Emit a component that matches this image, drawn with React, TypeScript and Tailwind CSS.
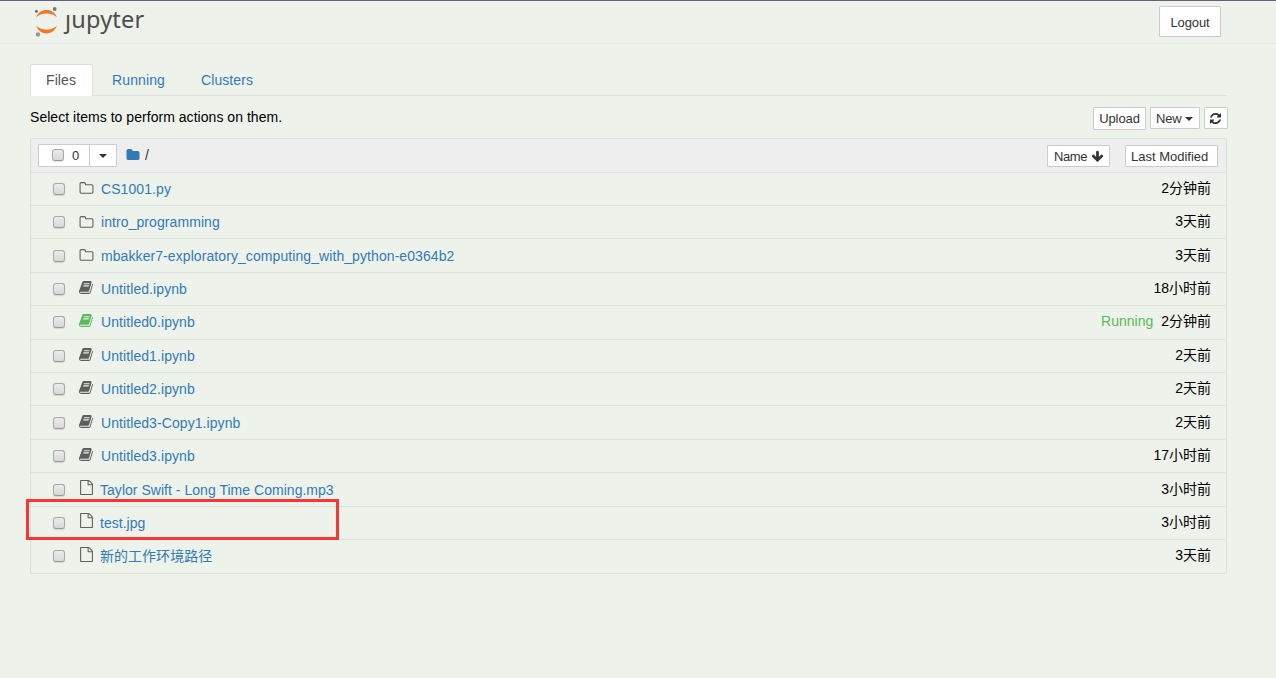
import React from 'react';

type Kind = 'folder' | 'notebook' | 'running' | 'file';

interface Item {
  name: string;
  kind: Kind;
  modified: string;
}

const items: Item[] = [
  { name: 'CS1001.py', kind: 'folder', modified: '2分钟前' },
  { name: 'intro_programming', kind: 'folder', modified: '3天前' },
  { name: 'mbakker7-exploratory_computing_with_python-e0364b2', kind: 'folder', modified: '3天前' },
  { name: 'Untitled.ipynb', kind: 'notebook', modified: '18小时前' },
  { name: 'Untitled0.ipynb', kind: 'running', modified: '2分钟前' },
  { name: 'Untitled1.ipynb', kind: 'notebook', modified: '2天前' },
  { name: 'Untitled2.ipynb', kind: 'notebook', modified: '2天前' },
  { name: 'Untitled3-Copy1.ipynb', kind: 'notebook', modified: '2天前' },
  { name: 'Untitled3.ipynb', kind: 'notebook', modified: '17小时前' },
  { name: 'Taylor Swift - Long Time Coming.mp3', kind: 'file', modified: '3小时前' },
  { name: 'test.jpg', kind: 'file', modified: '3小时前' },
  { name: '新的工作环境路径', kind: 'file', modified: '3天前' },
];

const paths = {
  folderOpen:
    'M1600 1312v-704q0-40-28-68t-68-28h-704q-40 0-68-28t-28-68v-64q0-40-28-68t-68-28h-320q-40 0-68 28t-28 68v960q0 40 28 68t68 28h1216q40 0 68-28t28-68zm128-704v704q0 92-66 158t-158 66h-1216q-92 0-158-66t-66-158v-960q0-92 66-158t158-66h320q92 0 158 66t66 158v32h672q92 0 158 66t66 158z',
  folder:
    'M1728 608v704q0 92-66 158t-158 66h-1216q-92 0-158-66t-66-158v-960q0-92 66-158t158-66h320q92 0 158 66t66 158v32h672q92 0 158 66t66 158z',
  file: 'M1596 380q28 28 48 76t20 88v1152q0 40-28 68t-68 28h-1344q-40 0-68-28t-28-68v-1600q0-40 28-68t68-28h896q40 0 88 20t76 48zm-444-244v376h376q-10-29-22-41l-313-313q-12-12-41-22zm384 1528v-1024h-416q-40 0-68-28t-28-68v-416h-768v1536h1280z',
  book: 'M1639 478q40 57 18 129l-275 906q-19 64-76.5 107.5t-122.5 43.5h-923q-77 0-148.5-53.5t-99.5-131.5q-24-67-2-127 0-4 3-27t4-37q1-8-3-21.5t-3-19.5q2-11 8-21t16.5-23.5 16.5-23.5q23-38 45-91.5t30-91.5q3-10 .5-30t-.5-28q3-11 17-28t17-23q21-36 42-92t25-90q1-9-2.5-32t.5-28q4-13 22-30.5t22-22.5q19-26 42.5-84.5t27.5-96.5q1-8-3-25.5t-2-26.5q2-8 9-18t18-23 17-21q8-12 16.5-30.5t15-35 16-36 19.5-32 26.5-23.5 36-11.5 47.5 5.5l-1 3q38-9 51-9h761q74 0 114 56t18 130l-274 906q-36 119-71.5 153.5t-128.5 34.5h-869q-27 0-38 15-11 16-1 43 24 70 144 70h923q29 0 56-15.5t35-41.5l300-987q7-22 5-57 38 15 59 43zm-1064 2q-4 13 2 22.5t20 9.5h608q13 0 25.5-9.5t16.5-22.5l21-64q4-13-2-22.5t-20-9.5h-608q-13 0-25.5 9.5t-16.5 22.5zm-83 256q-4 13 2 22.5t20 9.5h608q13 0 25.5-9.5t16.5-22.5l21-64q4-13-2-22.5t-20-9.5h-608q-13 0-25.5 9.5t-16.5 22.5z',
  refresh:
    'M1639 1056q0 5-1 7-64 268-268 434.5t-478 166.5q-146 0-282.5-55t-243.5-157l-129 129q-19 19-45 19t-45-19-19-45v-448q0-26 19-45t45-19h448q26 0 45 19t19 45-19 45l-137 137q71 66 161 102t187 36q134 0 250-65t186-179q11-17 53-117 8-23 30-23h192q13 0 22.5 9.5t9.5 22.5zm25-800v448q0 26-19 45t-45 19h-448q-26 0-45-19t-19-45 19-45l138-138q-148-137-349-137-134 0-250 65t-186 179q-11 17-53 117-8 23-30 23h-199q-13 0-22.5-9.5t-9.5-22.5v-7q65-268 270-434.5t480-166.5q146 0 284 55.5t245 156.5l130-129q19-19 45-19t45 19 19 45z',
  arrowDown:
    'M1675 832q0 53-37 90l-651 652q-39 37-91 37-53 0-90-37l-651-652q-38-36-38-90 0-53 38-91l74-75q39-37 91-37 53 0 90 37l294 294v-704q0-52 38-90t90-38h128q52 0 90 38t38 90v704l294-294q37-37 90-37 52 0 91 37l75 75q37 39 37 91z',
};

const Icon: React.FC<{ d: string; className?: string }> = ({ d, className = '' }) => (
  <svg viewBox="0 0 1792 1792" fill="currentColor" className={`shrink-0 ${className}`}>
    <path d={d} />
  </svg>
);

const Caret: React.FC = () => (
  <span className="mt-0.5 border-x-4 border-t-4 border-x-transparent border-t-[#333]" />
);

const Checkbox: React.FC = () => (
  <span className="size-3 shrink-0 rounded-[3px] border border-[#a9a9a9] border-b-[#999] bg-linear-to-b from-[#ebebeb] to-[#d8d8d8] shadow-[0_1px_1px_rgba(0,0,0,0.12)]" />
);

const button = 'flex items-center border border-[#ccc] bg-white text-[13px] leading-none text-[#333] rounded-[1px]';

const ItemIcon: React.FC<{ kind: Kind }> = ({ kind }) => {
  if (kind === 'folder') return <Icon d={paths.folderOpen} className="size-[15px] text-[#5e5e5e]" />;
  if (kind === 'file') return <Icon d={paths.file} className="mb-1 size-[15px] text-[#5e5e5e]" />;
  return (
    <Icon
      d={paths.book}
      className={`mb-[3px] size-[15px] ${kind === 'running' ? 'text-[#5cb85c]' : 'text-[#5e5e5e]'}`}
    />
  );
};

const Row: React.FC<{ item: Item }> = ({ item }) => (
  <li className="mr-px flex h-[33.42px] items-center border-t border-[#ddd] pr-3.5 pl-[22px]">
    <Checkbox />
    <span className="ml-3.5 flex w-[22px]">
      <ItemIcon kind={item.kind} />
    </span>
    <a className={`text-[#337ab7] ${item.kind === 'file' ? '-ml-px tracking-[0.03px]' : 'tracking-[0.08px]'}`}>
      {item.name}
    </a>
    {item.kind === 'running' && <span className="mb-[3px] ml-auto pr-2 text-[#5cb85c]">Running</span>}
    <span className={`mb-0.5 text-black ${item.kind === 'running' ? '' : 'ml-auto'}`}>{item.modified}</span>
  </li>
);

const Logo: React.FC = () => (
  <div className="flex h-8 items-start">
    <svg viewBox="0 0 28 32" className="h-8 w-7">
      <path d="M4 11.6C6 6.500 9.500 4 14.500 4S23 6.500 25 11.600C22.500 8.800 19 7.500 14.500 7.500S6.500 8.800 4 11.600Z" fill="#f37726" />
      <path d="M4 19.600C6 24.800 9.500 27.400 14.500 27.400S23 24.800 25 19.600C22.500 22.400 19 23.700 14.500 23.700S6.500 22.400 4 19.600Z" fill="#f37726" />
      <circle cx="22.700" cy="3" r="1.900" fill="#767677" />
      <circle cx="4.400" cy="5.400" r="1.400" fill="#616262" />
      <circle cx="6" cy="28.400" r="2.200" fill="#989798" />
    </svg>
    <span className="-mt-[3px] ml-[5px] font-['Noto_Sans'] text-[23.500px] leading-8 tracking-[0.2px] text-[#4e4e4e]">
      ȷupyter
    </span>
  </div>
);

export default function App() {
  return (
    <div className="relative min-h-[678px] border-t border-[#64607c] bg-[#edf2ea] font-['Liberation_Sans','Noto_Sans_CJK_SC',sans-serif] text-sm leading-5 text-black">
      <header className="flex h-[43px] items-start justify-between border-b border-[#e4e7e2] pr-[55px] pl-8">
        <div className="pt-[5px]">
          <Logo />
        </div>
        <button className={`${button} mt-[5px] h-[31px] w-[62px] justify-center pt-0.5 tracking-[-0.1px]`}>
          Logout
        </button>
      </header>

      <main className="pr-[49px] pl-[30px]">
        <nav className="mt-5 flex h-8 border-b border-[#ddd]">
          <a className="-mb-px h-8 w-[63px] rounded-t-xs border border-b-0 border-[#ddd] bg-white pt-[5px] pl-[15px] tracking-[0.1px] text-[#555]">
            Files
          </a>
          <a className="ml-[19px] pt-1.5 tracking-[0.12px] text-[#337ab7]">Running</a>
          <a className="ml-9 pt-1.5 tracking-[0.08px] text-[#337ab7]">Clusters</a>
        </nav>

        <div className="-mr-px flex h-[42px] pt-[11px]">
          <p className="grow tracking-[0.04px]">Select items to perform actions on them.</p>
          <div className="flex gap-1">
            <button className={`${button} h-[23px] w-[53px] justify-center tracking-[-0.1px]`}>Upload</button>
            <button className={`${button} h-[22px] w-[50px] gap-1 px-[5px] tracking-[-0.2px]`}>
              New <Caret />
            </button>
            <button className={`${button} h-[22px] w-6 justify-center pr-px`}>
              <Icon d={paths.refresh} className="size-[13px]" />
            </button>
          </div>
        </div>

        <section className="rounded-xs border border-[#ddd]">
          <div className="flex h-[32.65px] items-center bg-[#eee] pr-2 pl-[7px]">
            <button className={`${button} h-[23px] w-[52px] pl-[13px]`}>
              <Checkbox />
              <span className="ml-2">0</span>
            </button>
            <button className={`${button} -ml-px h-[23px] w-7 justify-center`}>
              <Caret />
            </button>
            <Icon d={paths.folder} className="ml-[9px] size-[14px] text-[#337ab7]" />
            <span className="ml-[5px] text-[#333]">/</span>
            <button className={`${button} mt-0.5 ml-auto h-[22px] w-[63px] gap-1 pl-1.5 tracking-[-0.4px]`}>
              Name <Icon d={paths.arrowDown} className="size-[13px]" />
            </button>
            <button className={`${button} mt-0.5 ml-[15px] h-[22px] w-[93px] pl-[5px] whitespace-nowrap`}>
              Last Modified
            </button>
          </div>
          <ul>
            {items.map((item) => (
              <Row key={item.name} item={item} />
            ))}
          </ul>
        </section>
      </main>

      {/* Annotation around test.jpg */}
      <div className="absolute top-[498px] left-[26px] h-[41px] w-[313px] border-3 border-[#f93636]" />
    </div>
  );
}
